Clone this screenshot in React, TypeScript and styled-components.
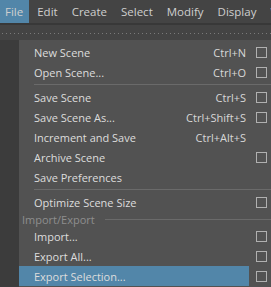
import React from "react";
import styled, { createGlobalStyle } from "styled-components";

const Global = createGlobalStyle`
  html, body { margin: 0; padding: 0; background: #444444; overflow: hidden; }
  body { font-family: "Open Sans", "Noto Sans", sans-serif; }
`;

const Page = styled.div`
  width: 271px;
  height: 287px;
  display: flex;
  flex-direction: column;
  background: #444444;
  overflow: hidden;
`;

const MenuBar = styled.div`
  height: 23px;
  display: flex;
  align-items: stretch;
  background: #444444;
  gap: 3px;
  white-space: nowrap;
  overflow: hidden;
`;

const BarItem = styled.div<{ $active?: boolean }>`
  display: flex;
  align-items: center;
  padding: 0 6px 0 5px;
  font-size: 11.5px;
  color: #cfcfcf;
  background: ${(p) => (p.$active ? "#5286a9" : "transparent")};
`;

const BarRule = styled.div`
  height: 2px;
  background: #383838;
`;

const Shelf = styled.div`
  height: 15px;
  display: flex;
  align-items: center;
  padding-top: 1px;
  box-sizing: border-box;
`;

const Dots = styled.div`
  flex: 1;
  height: 1px;
  background-image: linear-gradient(to right, #7a7a7a 1px, transparent 1px);
  background-size: 4px 1px;
  background-position: 2px 0;
`;

const Body = styled.div`
  flex: 1;
  display: flex;
`;

const SideStrip = styled.div`
  width: 19px;
  background: #3c3c3c;
`;

const Menu = styled.div`
  flex: 1;
  background: #525252;
  padding-top: 2px;
  display: flex;
  flex-direction: column;
`;

const Row = styled.div`
  height: 20px;
  display: flex;
  align-items: stretch;
`;

const ItemArea = styled.div<{ $hover?: boolean }>`
  width: 230px;
  display: flex;
  align-items: center;
  justify-content: space-between;
  padding: 0 3px 0 15px;
  box-sizing: border-box;
  font-size: 11px;
  color: #dddddd;
  background: ${(p) => (p.$hover ? "#5286a9" : "transparent")};
  white-space: nowrap;
`;

const Shortcut = styled.span`
  color: #d8d8d8;
`;

const BoxCell = styled.div`
  flex: 1;
  display: flex;
  align-items: center;
  padding-left: 7px;
`;

const Box = styled.div`
  width: 11px;
  height: 11px;
  box-sizing: border-box;
  border: 1px solid #b0b0b0;
`;

const Separator = styled.div`
  height: 5px;
  display: flex;
  align-items: center;
  padding-left: 15px;
  &::after {
    content: "";
    flex: 1;
    height: 1px;
    background: #6a6a6a;
  }
`;

const Header = styled.div`
  height: 14px;
  display: flex;
  align-items: center;
  gap: 10px;
  padding-left: 3px;
  font-size: 11px;
  color: #8e8e8e;
  white-space: nowrap;
  &::after {
    content: "";
    flex: 1;
    height: 1px;
    background: #6a6a6a;
  }
`;

type Item = {
  kind: "item";
  label: string;
  shortcut?: string;
  box?: boolean;
  hover?: boolean;
};
type Entry = Item | { kind: "sep" } | { kind: "header"; label: string };

const entries: Entry[] = [
  { kind: "item", label: "New Scene", shortcut: "Ctrl+N", box: true },
  { kind: "item", label: "Open Scene...", shortcut: "Ctrl+O", box: true },
  { kind: "sep" },
  { kind: "item", label: "Save Scene", shortcut: "Ctrl+S", box: true },
  { kind: "item", label: "Save Scene As...", shortcut: "Ctrl+Shift+S", box: true },
  { kind: "item", label: "Increment and Save", shortcut: "Ctrl+Alt+S" },
  { kind: "item", label: "Archive Scene", box: true },
  { kind: "item", label: "Save Preferences" },
  { kind: "sep" },
  { kind: "item", label: "Optimize Scene Size", box: true },
  { kind: "header", label: "Import/Export" },
  { kind: "item", label: "Import...", box: true },
  { kind: "item", label: "Export All...", box: true },
  { kind: "item", label: "Export Selection...", box: true, hover: true },
];

const barItems = ["File", "Edit", "Create", "Select", "Modify", "Display", "Windows"];

export default function App() {
  return (
    <Page>
      <Global />
      <MenuBar>
        {barItems.map((b, i) => (
          <BarItem key={b} $active={i === 0}>
            {b}
          </BarItem>
        ))}
      </MenuBar>
      <BarRule />
      <Shelf>
        <Dots />
      </Shelf>
      <Body>
        <SideStrip />
        <Menu>
          {entries.map((e, i) => {
            if (e.kind === "sep") return <Separator key={i} />;
            if (e.kind === "header") return <Header key={i}>{e.label}</Header>;
            return (
              <Row key={i}>
                <ItemArea $hover={e.hover}>
                  <span>{e.label}</span>
                  {e.shortcut && <Shortcut>{e.shortcut}</Shortcut>}
                </ItemArea>
                <BoxCell>{e.box && <Box />}</BoxCell>
              </Row>
            );
          })}
        </Menu>
      </Body>
    </Page>
  );
}
